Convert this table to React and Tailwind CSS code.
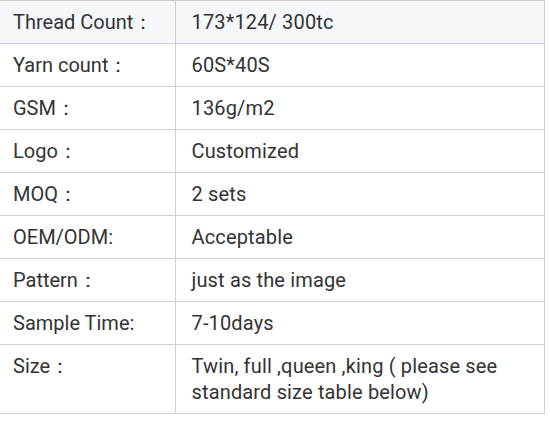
import React from "react";

const rows = [
  ["Thread Count：", "173*124/ 300tc"],
  ["Yarn count：", "60S*40S"],
  ["GSM：", "136g/m2"],
  ["Logo：", "Customized"],
  ["MOQ：", "2 sets"],
  ["OEM/ODM:", "Acceptable"],
  ["Pattern：", "just as the image"],
  ["Sample Time:", "7-10days"],
  ["Size：", "Twin, full ,queen ,king ( please see standard size table below)"],
];

const App = () => {
  return (
    <div
      className="min-h-screen bg-white text-[#333333]"
      style={{ fontFamily: "Roboto, 'DejaVu Sans', sans-serif" }}
    >
      <table className="w-[545px] border-collapse text-[20px] leading-[26px]">
        <tbody>
          {rows.map(([label, value], i) => (
            <tr key={label} className={i === 0 ? "bg-[#f5f7fa]" : ""}>
              <td className="w-[175px] border-t border-b border-r border-[#cfcfcf] pl-[13px] pr-2 py-2 align-top">
                {label}
              </td>
              <td className="border-t border-b border-r border-[#cfcfcf] pl-[16px] pr-3 py-2 align-top tracking-[0.15px]">
                {value}
              </td>
            </tr>
          ))}
        </tbody>
      </table>
    </div>
  );
};

export default App;
